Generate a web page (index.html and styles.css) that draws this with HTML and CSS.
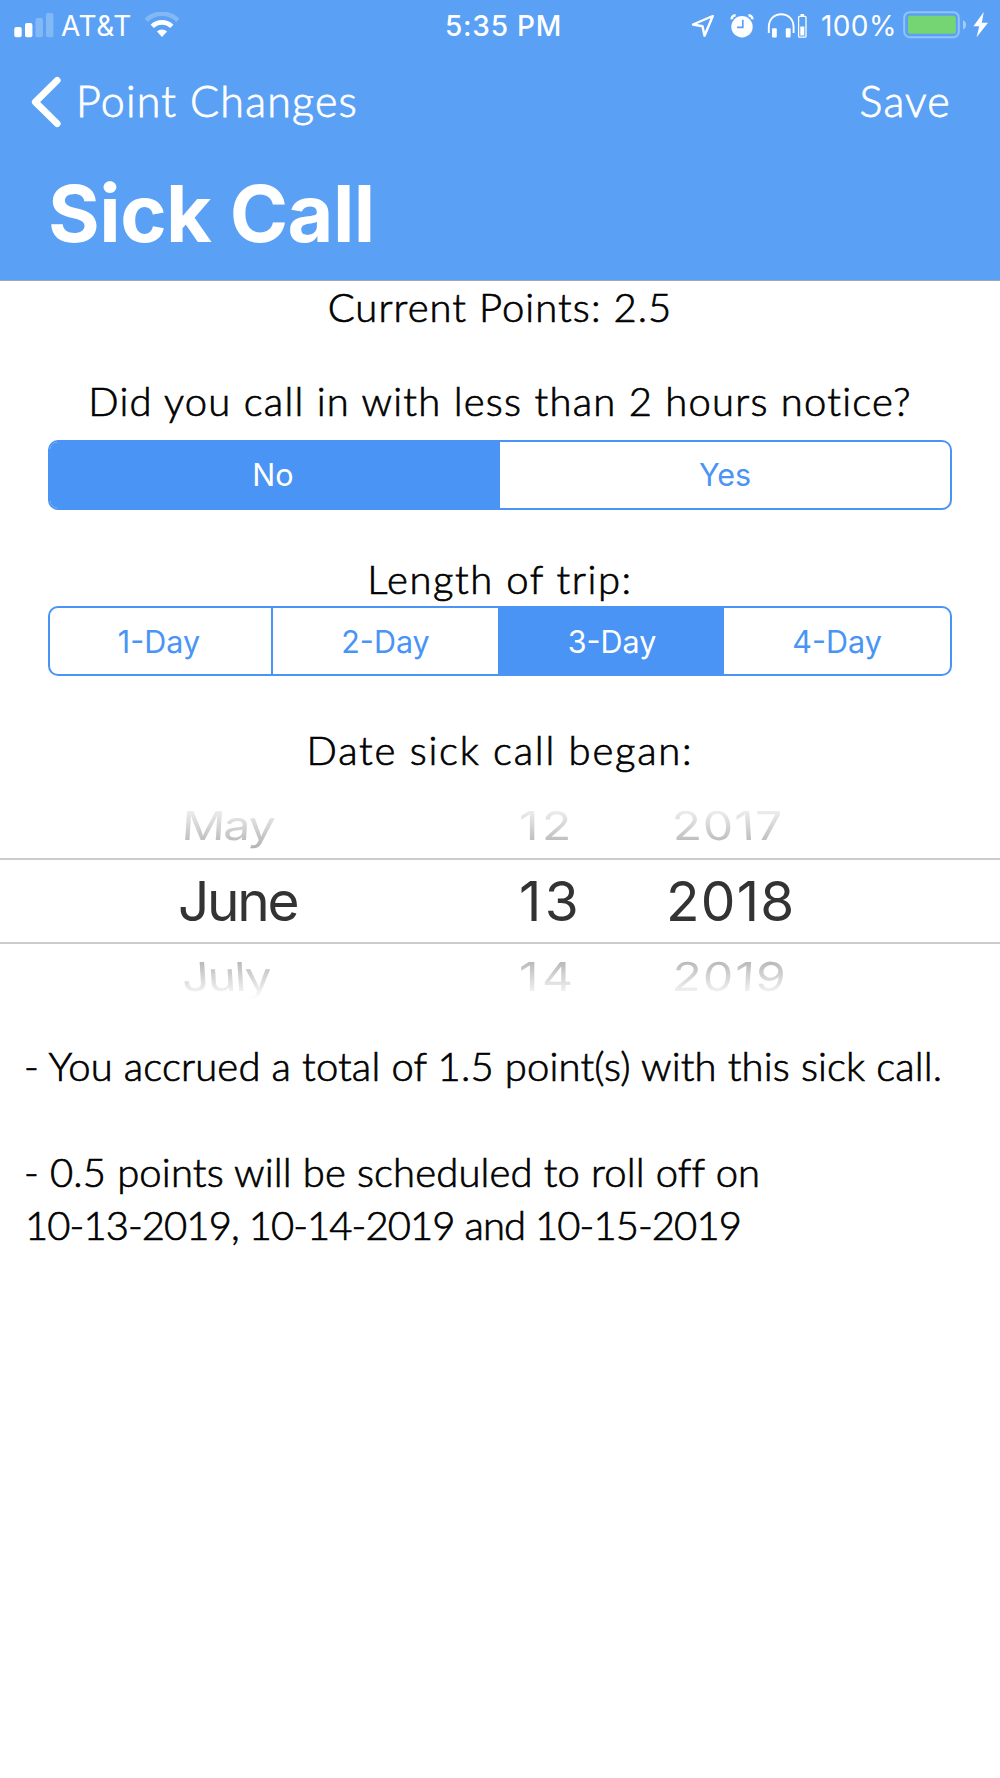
FILE: index.html
```html
<!DOCTYPE html>
<html lang="en">
<head>
    <meta charset="UTF-8">
    <meta name="viewport" content="width=device-width, initial-scale=1.0">
    <title>Sick Call</title>
    <link rel="stylesheet" href="styles.css">
</head>
<body>

<header class="header">
    <!-- Status bar -->
    <div class="status-bar">
        <div class="status-left">
            <svg class="signal" width="40" height="26" viewBox="0 0 40 26" fill="#fff">
                <rect x="0.3" y="15" width="7.4" height="10.3" rx="2"/>
                <rect x="11" y="11" width="7.4" height="14.3" rx="2"/>
                <rect x="21.5" y="6" width="7.4" height="19.3" rx="2" opacity="0.25"/>
                <rect x="32" y="1" width="7.4" height="24.3" rx="2" opacity="0.25"/>
            </svg>
            <span class="carrier">AT&amp;T</span>
            <svg class="wifi" width="36" height="26" viewBox="0 0 36 26">
                <path d="M2.2 8.3a22.5 22.5 0 0 1 31.6 0" fill="none" stroke="#fff" stroke-width="4.6" opacity="0.25"/>
                <path d="M8.2 14.4a14 14 0 0 1 19.6 0" fill="none" stroke="#fff" stroke-width="4.6"/>
                <path d="M12.9 19.6a7.3 7.3 0 0 1 10.2 0L18 25z" fill="#fff"/>
            </svg>
        </div>
        <div class="time">5:35 PM</div>
        <div class="status-right">
            <svg class="location" width="24" height="24" viewBox="0 0 24 24">
                <path d="M2 10.5 21.8 2 13.5 21.7 11.5 12.2z" fill="none" stroke="#fff" stroke-width="2.4" stroke-linejoin="round"/>
            </svg>
            <svg class="alarm" width="24" height="24" viewBox="0 0 24 24">
                <circle cx="12" cy="12.8" r="10.7" fill="#fff"/>
                <path d="M1.8 5.2A3.2 3.2 0 0 1 5.6 1.6M22.2 5.2A3.2 3.2 0 0 0 18.4 1.6" fill="none" stroke="#fff" stroke-width="2.6"/>
                <path d="M12.8 5.8v7.6H7" fill="none" stroke="#5aa1f5" stroke-width="1.7"/>
            </svg>
            <svg class="headphones" width="41" height="26" viewBox="0 0 41 26" fill="none" stroke="#fff">
                <path d="M1.8 20v-6C1.8 6 7.5 1.3 14.2 1.3S26.6 6 26.6 14v6" stroke-width="1.9"/>
                <rect x="5" y="15.3" width="4.8" height="9.2" rx="1" fill="#fff" stroke="none"/>
                <rect x="18.8" y="15.3" width="4.8" height="9.2" rx="1" fill="#fff" stroke="none"/>
                <rect x="31.6" y="3.3" width="7.4" height="20.9" rx="1" stroke-width="1.3"/>
                <rect x="33.3" y="13.5" width="4" height="9" fill="#fff" stroke="none"/>
                <path d="M33.5 2h3.6" stroke-width="2"/>
            </svg>
            <span class="percent">100%</span>
            <svg class="battery" width="64" height="28" viewBox="0 0 64 28">
                <rect x="1.2" y="1.2" width="54.6" height="25" rx="5.5" fill="none" stroke="#fff" stroke-width="2" opacity="0.35"/>
                <rect x="5" y="4.7" width="47.8" height="18" rx="2.5" fill="#75d572"/>
                <path d="M60 9.2c4 1.2 4 8 0 9.2z" fill="#fff" opacity="0.45"/>
            </svg>
            <svg class="bolt" width="16" height="26" viewBox="0 0 16 26" fill="#fff">
                <path d="M10.8 0 .4 14.3h5.8L3.6 25.3 15 10.8H8.8z"/>
            </svg>
        </div>
    </div>

    <!-- Navigation -->
    <nav class="nav">
        <a class="back">
            <svg class="chevron" width="32" height="52" viewBox="0 0 32 52">
                <path d="M27.2 4.3 5.3 26l21.9 21.7" fill="none" stroke="#fff" stroke-width="6.8" stroke-linecap="round" stroke-linejoin="round"/>
            </svg>
            <span class="back-label">Point Changes</span>
        </a>
        <a class="save">Save</a>
    </nav>
    <h1 class="title">Sick Call</h1>
</header>

<main>
    <p class="label points">Current Points: 2.5</p>

    <p class="label notice">Did you call in with less than 2 hours notice?</p>
    <div class="segmented two">
        <div class="segment active">No</div>
        <div class="segment">Yes</div>
    </div>

    <p class="label length">Length of trip:</p>
    <div class="segmented four">
        <div class="segment">1-Day</div>
        <div class="segment">2-Day</div>
        <div class="segment active">3-Day</div>
        <div class="segment">4-Day</div>
    </div>

    <p class="label began">Date sick call began:</p>
    <div class="picker">
        <div class="picker-row before">
            <span class="lean-right month">May</span>
            <span class="day">12</span>
            <span class="lean-left year">2017</span>
        </div>
        <div class="picker-row selected">
            <span class="month">June</span>
            <span class="day">13</span>
            <span class="year">2018</span>
        </div>
        <div class="picker-row after">
            <span class="lean-left month">July</span>
            <span class="day">14</span>
            <span class="lean-right year">2019</span>
        </div>
    </div>

    <!-- Results -->
    <div class="results">
        <p class="accrued">- You accrued a total of 1.5 point(s) with this sick call.</p>
        <p class="rolloff">- 0.5 points will be scheduled to roll off on</p>
        <p class="dates">10-13-2019, 10-14-2019 and 10-15-2019</p>
    </div>
</main>

</body>
</html>
```
FILE: styles.css
```css
* {
    box-sizing: border-box;
}
body {
    margin: 0;
    background-color: #fff;
    color: #000;
    font-family: Lato, sans-serif;
}
p, h1 {
    margin: 0;
    white-space: nowrap;
}
svg {
    display: block;
    flex: none;
}

/* Header */
.header {
    height: 281px;
    background-color: #5aa1f5;
    border-bottom: 1px solid #9ba9bd;
    color: #fff;
}
.status-bar {
    display: grid;
    grid-template-columns: 1fr auto 1fr;
    align-items: center;
    height: 51px;
    padding: 0 11px 0 14px;
    font-family: Inter, sans-serif;
    font-size: 28px;
    line-height: 52px;
}
.status-left, .status-right {
    display: flex;
    align-items: center;
}
.status-right {
    justify-content: flex-end;
}
.signal {
    margin-top: -2px;
    margin-right: 7px;
}
.carrier {
    width: 83px;
    letter-spacing: 0.6px;
}
.wifi {
    margin-top: -2px;
}
.time {
    padding-left: 4px;
    font-weight: 500;
    letter-spacing: 0.8px;
}
.location {
    margin-right: 15px;
}
.alarm {
    margin-right: 13px;
}
.headphones {
    margin-right: 13px;
}
.percent {
    width: 82px;
    letter-spacing: 0.4px;
}
.battery {
    margin-top: -2px;
    margin-right: 6px;
}
.bolt {
    margin-top: -2px;
}
.nav {
    display: flex;
    justify-content: space-between;
    height: 97px;
    padding: 0 49px 0 30px;
    font-size: 43px;
    font-weight: 300;
    line-height: 99px;
    -webkit-text-stroke: 0.8px #fff;
}
.back {
    display: flex;
}
.chevron {
    margin: 25px 14px 0 0;
}
.back-label {
    letter-spacing: 1.2px;
}
.save {
    letter-spacing: 1.2px;
}
.title {
    padding-left: 48px;
    font-family: Inter, sans-serif;
    font-size: 79px;
    font-weight: 700;
    line-height: 130px;
    letter-spacing: -0.5px;
}

/* Questions */
.label {
    height: 50px;
    font-size: 40px;
    font-weight: 300;
    line-height: 52px;
    text-align: center;
    letter-spacing: 1.05px;
    -webkit-text-stroke: 0.7px #000;
}
.notice {
    margin-top: 44px;
    letter-spacing: 1.25px;
}
.length {
    margin-top: 43px;
    letter-spacing: 1.55px;
}
.began {
    margin-top: 48px;
    letter-spacing: 1.75px;
}
.segmented {
    display: grid;
    height: 70px;
    margin: 0 48px;
    overflow: hidden;
    border: 2px solid #4994f4;
    border-radius: 10px;
    color: #4994f4;
    font-family: Inter, sans-serif;
    font-size: 30.5px;
    line-height: 67px;
    text-align: center;
}
.two {
    grid-template-columns: 1fr 1fr;
    margin-top: 15px;
    line-height: 66px;
}
.two .active {
    padding-right: 4px;
}
.four {
    grid-template-columns: 221px 227px 226px 1fr;
    margin-top: 3px;
}
.four .segment:first-child {
    padding-right: 3px;
}
.segment + .segment {
    border-left: 2px solid #4994f4;
}
.active + .segment {
    border-left: 0 !important;
}
.active {
    background-color: #4994f4;
    color: #fff;
}

/* Date picker */
.picker {
    margin-top: 15px;
    font-family: Inter, sans-serif;
}
.picker-row {
    display: grid;
    grid-template-columns: 340px 147px 1fr;
    padding-left: 179px;
}
.picker-row span {
    justify-self: start;
}
.selected {
    height: 86px;
    border-top: 2px solid #ccc;
    border-bottom: 2px solid #ccc;
    color: #333;
    font-size: 55px;
    line-height: 82px;
}
.selected .month {
    margin-left: -1px;
    letter-spacing: -2.3px;
}
.selected .day {
    letter-spacing: 3.4px;
}
.selected .year {
    letter-spacing: 1.2px;
}
.before, .after {
    height: 69px;
    color: #aaa;
    font-size: 48px;
}
.before span, .after span {
    transform: scaleY(0.83);
}
.before {
    line-height: 73px;
    -webkit-mask-image: linear-gradient(transparent 10px, #000 65px);
    mask-image: linear-gradient(transparent 10px, #000 65px);
}
.after {
    line-height: 66px;
    -webkit-mask-image: linear-gradient(#000 10px, transparent 55px);
    mask-image: linear-gradient(#000 10px, transparent 55px);
}
.before .month, .after .month {
    padding-left: 3px;
    letter-spacing: -1.6px;
}
.before .day, .after .day {
    letter-spacing: 3.6px;
}
.before .year, .after .year {
    padding-left: 6px;
    letter-spacing: 1.6px;
}
.picker-row .lean-right {
    transform: scaleY(0.83) skewX(-3deg);
}
.picker-row .lean-left {
    transform: scaleY(0.83) skewX(3deg);
}

/* Results */
.results {
    margin-top: 27px;
    padding-left: 24px;
    font-size: 40px;
    font-weight: 300;
    line-height: 53px;
    letter-spacing: 0.15px;
    -webkit-text-stroke: 0.7px #000;
}
.rolloff {
    margin-top: 53px;
}
.dates {
    padding-left: 1px;
    letter-spacing: -0.93px;
}
```
